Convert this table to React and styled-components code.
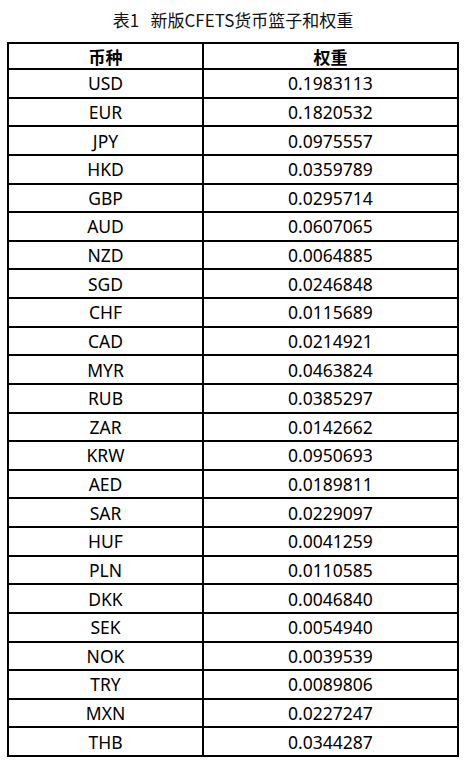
import React from 'react';
import styled, { createGlobalStyle } from 'styled-components';

const rows = [
  ['USD', '0.1983113'],
  ['EUR', '0.1820532'],
  ['JPY', '0.0975557'],
  ['HKD', '0.0359789'],
  ['GBP', '0.0295714'],
  ['AUD', '0.0607065'],
  ['NZD', '0.0064885'],
  ['SGD', '0.0246848'],
  ['CHF', '0.0115689'],
  ['CAD', '0.0214921'],
  ['MYR', '0.0463824'],
  ['RUB', '0.0385297'],
  ['ZAR', '0.0142662'],
  ['KRW', '0.0950693'],
  ['AED', '0.0189811'],
  ['SAR', '0.0229097'],
  ['HUF', '0.0041259'],
  ['PLN', '0.0110585'],
  ['DKK', '0.0046840'],
  ['SEK', '0.0054940'],
  ['NOK', '0.0039539'],
  ['TRY', '0.0089806'],
  ['MXN', '0.0227247'],
  ['THB', '0.0344287'],
];

function App() {
  return (
    <>
      <GlobalStyle />
      <Page>
        <Title>表1&nbsp;&nbsp;&nbsp;新版CFETS货币篮子和权重</Title>
        <Table>
          <HeadRow>
            <Cell bold>币种</Cell>
            <Cell bold divider>权重</Cell>
          </HeadRow>
          {rows.map(([code, weight]) => (
            <Row key={code}>
              <Cell>{code}</Cell>
              <Cell divider>{weight}</Cell>
            </Row>
          ))}
        </Table>
      </Page>
    </>
  );
}

const GlobalStyle = createGlobalStyle`
  body {
    margin: 0;
    background: #fff;
    color: #000;
    font-family: "Noto Sans", "Noto Sans CJK SC", sans-serif;
  }
`;

const Page = styled.div`
  width: 465px;
  padding: 8px 6px 0 7px;
  box-sizing: border-box;
`;

const Title = styled.div`
  text-align: center;
  font-size: 17px;
  line-height: 24px;
  height: 24px;
  margin-bottom: 10px;
  color: #111;
  font-family: "Noto Sans CJK SC", sans-serif;
`;

const Table = styled.div`
  border: 2px solid #000;
  width: 452px;
  box-sizing: border-box;
`;

const HeadRow = styled.div`
  display: grid;
  grid-template-columns: 193px 1fr;
  height: 24px;
`;

const Row = styled.div`
  display: grid;
  grid-template-columns: 193px 1fr;
  border-top: 2px solid #000;
  height: 26.64px;
`;

const Cell = styled.div`
  display: flex;
  align-items: center;
  justify-content: center;
  font-size: ${(p) => (p.bold ? '17px' : '17.5px')};
  font-weight: ${(p) => (p.bold ? 700 : 400)};
  font-family: ${(p) =>
    p.bold ? '"Noto Sans CJK SC", sans-serif' : '"Noto Sans", "Noto Sans CJK SC", sans-serif'};
  border-left: ${(p) => (p.divider ? '2px solid #000' : 'none')};
  white-space: nowrap;
`;

export default App;
